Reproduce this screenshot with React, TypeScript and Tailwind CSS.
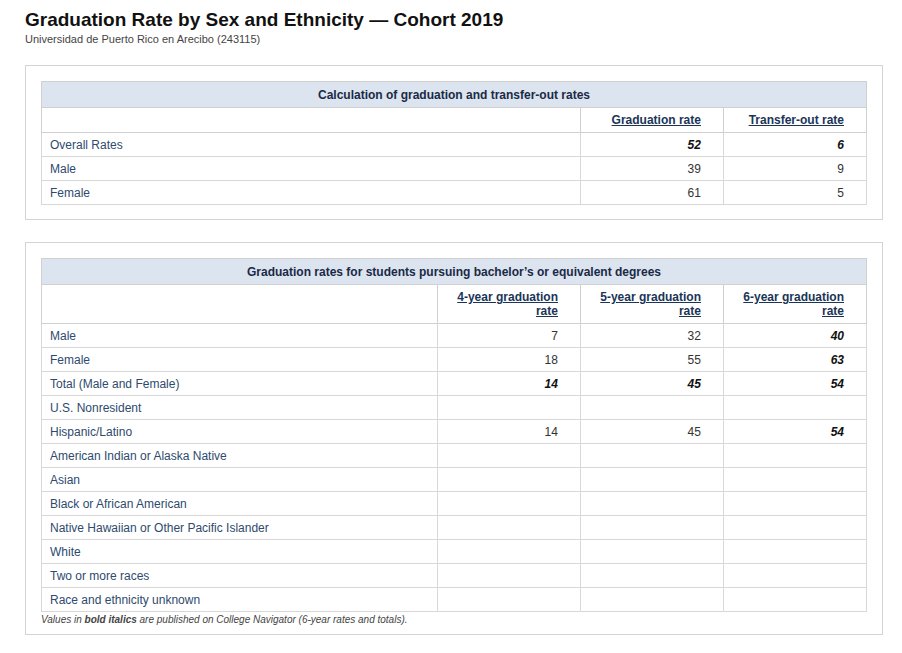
import React from "react";

type Cell = { v: string; b?: boolean };
const f = { fontFamily: '"Liberation Sans", Arial, sans-serif' };

function Table({ caption, heads, cols, rows, headH }: { caption: string; heads: string[][]; cols: string; rows: [string, ...Cell[]][]; headH: string }) {
  return (
    <table className="w-full border-collapse border border-[#d0d0d0] text-[12px] text-[#333]" style={{ tableLayout: "fixed" }}>
      <colgroup>
        <col />
        {heads.map((_, i) => <col key={i} className={cols} />)}
      </colgroup>
      <thead>
        <tr>
          <th colSpan={heads.length + 1} className="h-[26px] bg-[#dce4f0] border border-[#d0d0d0] text-center font-bold text-[#1a2a44] text-[12px]">{caption}</th>
        </tr>
        <tr className={headH}>
          <th className="border border-[#d0d0d0]"></th>
          {heads.map((h, i) => (
            <th key={i} className="border border-[#d0d0d0] text-right pr-[22px] font-bold leading-[14px] align-middle">
              {h.map((l, j) => <div key={j}><span className="underline text-[#1a3557]">{l}</span></div>)}
            </th>
          ))}
        </tr>
      </thead>
      <tbody>
        {rows.map(([label, ...cells], i) => (
          <tr key={i} className="h-[24px]">
            <td className="border border-[#d8d8d8] pl-[8px] text-[#2e4a6e]">{label}</td>
            {cells.map((c, j) => (
              <td key={j} className={`border border-[#d8d8d8] text-right pr-[22px] ${c.b ? "font-bold italic text-[#111]" : ""}`}>{c.v}</td>
            ))}
          </tr>
        ))}
      </tbody>
    </table>
  );
}

const e: Cell = { v: "" };
export default function App() {
  return (
    <div className="w-[902px] h-[653px] bg-white px-[25px] pt-[8px]" style={f}>
      <h1 className="text-[19px] font-bold text-[#111] leading-[24px]">Graduation Rate by Sex and Ethnicity — Cohort 2019</h1>
      <div className="text-[11px] text-[#444] leading-[14px]">Universidad de Puerto Rico en Arecibo (243115)</div>
      <div className="mt-[19px] border border-[#d4d4d4] px-[15px] pt-[15px] pb-[14px] w-[858px]">
        <Table caption="Calculation of graduation and transfer-out rates" heads={[["Graduation rate"], ["Transfer-out rate"]]} cols="w-[143px]" headH="h-[25px]"
          rows={[["Overall Rates", { v: "52", b: true }, { v: "6", b: true }], ["Male", { v: "39" }, { v: "9" }], ["Female", { v: "61" }, { v: "5" }]]} />
      </div>
      <div className="mt-[22px] border border-[#d4d4d4] px-[15px] pt-[15px] pb-[8px] w-[858px]">
        <Table caption="Graduation rates for students pursuing bachelor’s or equivalent degrees" heads={[["4-year graduation", "rate"], ["5-year graduation", "rate"], ["6-year graduation", "rate"]]} cols="w-[143px]" headH="h-[39px]"
          rows={[
            ["Male", { v: "7" }, { v: "32" }, { v: "40", b: true }],
            ["Female", { v: "18" }, { v: "55" }, { v: "63", b: true }],
            ["Total (Male and Female)", { v: "14", b: true }, { v: "45", b: true }, { v: "54", b: true }],
            ["U.S. Nonresident", e, e, e],
            ["Hispanic/Latino", { v: "14" }, { v: "45" }, { v: "54", b: true }],
            ["American Indian or Alaska Native", e, e, e],
            ["Asian", e, e, e],
            ["Black or African American", e, e, e],
            ["Native Hawaiian or Other Pacific Islander", e, e, e],
            ["White", e, e, e],
            ["Two or more races", e, e, e],
            ["Race and ethnicity unknown", e, e, e],
          ]} />
        <div className="text-[10px] italic text-[#444] mt-[1px] leading-[13px]">Values in <b>bold italics</b> are published on College Navigator (6-year rates and totals).</div>
      </div>
    </div>
  );
}
